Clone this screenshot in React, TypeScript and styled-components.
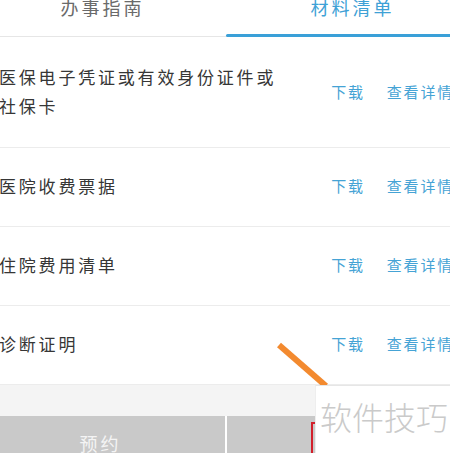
import React from "react";
import styled, { createGlobalStyle } from "styled-components";

const Global = createGlobalStyle`
  html, body { margin: 0; padding: 0; background: #fff; }
  body { width: 450px; height: 453px; overflow: hidden; font-family: "Noto Sans CJK SC", "Noto Sans", sans-serif; }
`;

const Viewport = styled.div`
  position: relative;
  width: 450px;
  height: 453px;
  overflow: hidden;
`;

const Page = styled.div`
  width: 500px;
  margin-left: -24px;
  display: flex;
  flex-direction: column;
`;

const TabBar = styled.div`
  display: flex;
  height: 37px;
  border-bottom: 1px solid #e6e6e6;
  box-sizing: border-box;
`;

const Tab = styled.div<{ $active?: boolean }>`
  flex: 1;
  position: relative;
  display: flex;
  justify-content: center;
  align-items: flex-start;
  font-size: 18px;
  line-height: 14px;
  letter-spacing: 3px;
  text-indent: 3px;
  color: ${(p) => (p.$active ? "#3ea1d6" : "#6a6a6a")};
  &::after {
    content: "";
    display: ${(p) => (p.$active ? "block" : "none")};
    position: absolute;
    left: 0;
    right: 0;
    bottom: -1px;
    height: 3px;
    border-radius: 2px;
    background: #3aa0d8;
  }
`;

const List = styled.div`
  display: flex;
  flex-direction: column;
  padding-top: 1px;
`;

const Row = styled.div<{ $first?: boolean }>`
  display: flex;
  align-items: center;
  justify-content: space-between;
  padding: ${(p) => (p.$first ? "24px 22px 27px 23px" : "23px 22px 26px 23px")};
  border-bottom: 1px solid #ececec;
`;

const Name = styled.div`
  width: 300px;
  font-size: 17px;
  line-height: 29px;
  letter-spacing: 2.8px;
  color: #363636;
`;

const Links = styled.div`
  display: flex;
  gap: 22px;
  font-size: 15px;
  line-height: 29px;
  letter-spacing: 1.8px;
  color: #45a3d5;
  white-space: nowrap;
`;

const Band = styled.div`
  height: 31px;
  background: #f4f4f4;
`;

const ButtonBar = styled.div`
  display: flex;
  gap: 2px;
  background: #fff;
  height: 60px;
`;

const Button = styled.div`
  flex: 1;
  background: #c9c9c9;
  color: #f4f4f4;
  font-size: 18px;
  letter-spacing: 3px;
  display: flex;
  justify-content: center;
  padding-top: 17px;
  line-height: 20px;
`;

const Arrow = styled.svg`
  position: absolute;
  left: 270px;
  top: 338px;
  pointer-events: none;
`;

const Highlight = styled.div`
  position: absolute;
  left: 311px;
  top: 422px;
  width: 80px;
  height: 60px;
  border: 2px solid #d21f2b;
`;

const Watermark = styled.div`
  position: absolute;
  left: 315px;
  top: 385px;
  right: 0;
  bottom: 0;
  background: #fff;
  border-top: 1px solid #e6e6e6;
  border-left: 1px solid #eeeeee;
  color: #cacaca;
  font-size: 32px;
  font-weight: 300;
  line-height: 40px;
  padding: 10px 0 0 4px;
  white-space: nowrap;
`;

const items: string[][] = [
  ["医保电子凭证或有效身份证件或", "社保卡"],
  ["医院收费票据"],
  ["住院费用清单"],
  ["诊断证明"],
];

export default function App() {
  return (
    <Viewport>
      <Global />
      <Page>
        <TabBar>
          <Tab>办事指南</Tab>
          <Tab $active>材料清单</Tab>
        </TabBar>
        <List>
          {items.map((lines, i) => (
            <Row key={i} $first={i === 0}>
              <Name>
                {lines.map((l, j) => (
                  <div key={j}>{l}</div>
                ))}
              </Name>
              <Links>
                <span>下载</span>
                <span>查看详情</span>
              </Links>
            </Row>
          ))}
        </List>
        <Band />
        <ButtonBar>
          <Button>预约</Button>
          <Button />
        </ButtonBar>
      </Page>
      <Arrow width="70" height="60" viewBox="0 0 70 60">
        <line x1="9" y1="7" x2="56" y2="48" stroke="#f38a2f" strokeWidth="6" />
      </Arrow>
      <Highlight />
      <Watermark>软件技巧</Watermark>
    </Viewport>
  );
}
